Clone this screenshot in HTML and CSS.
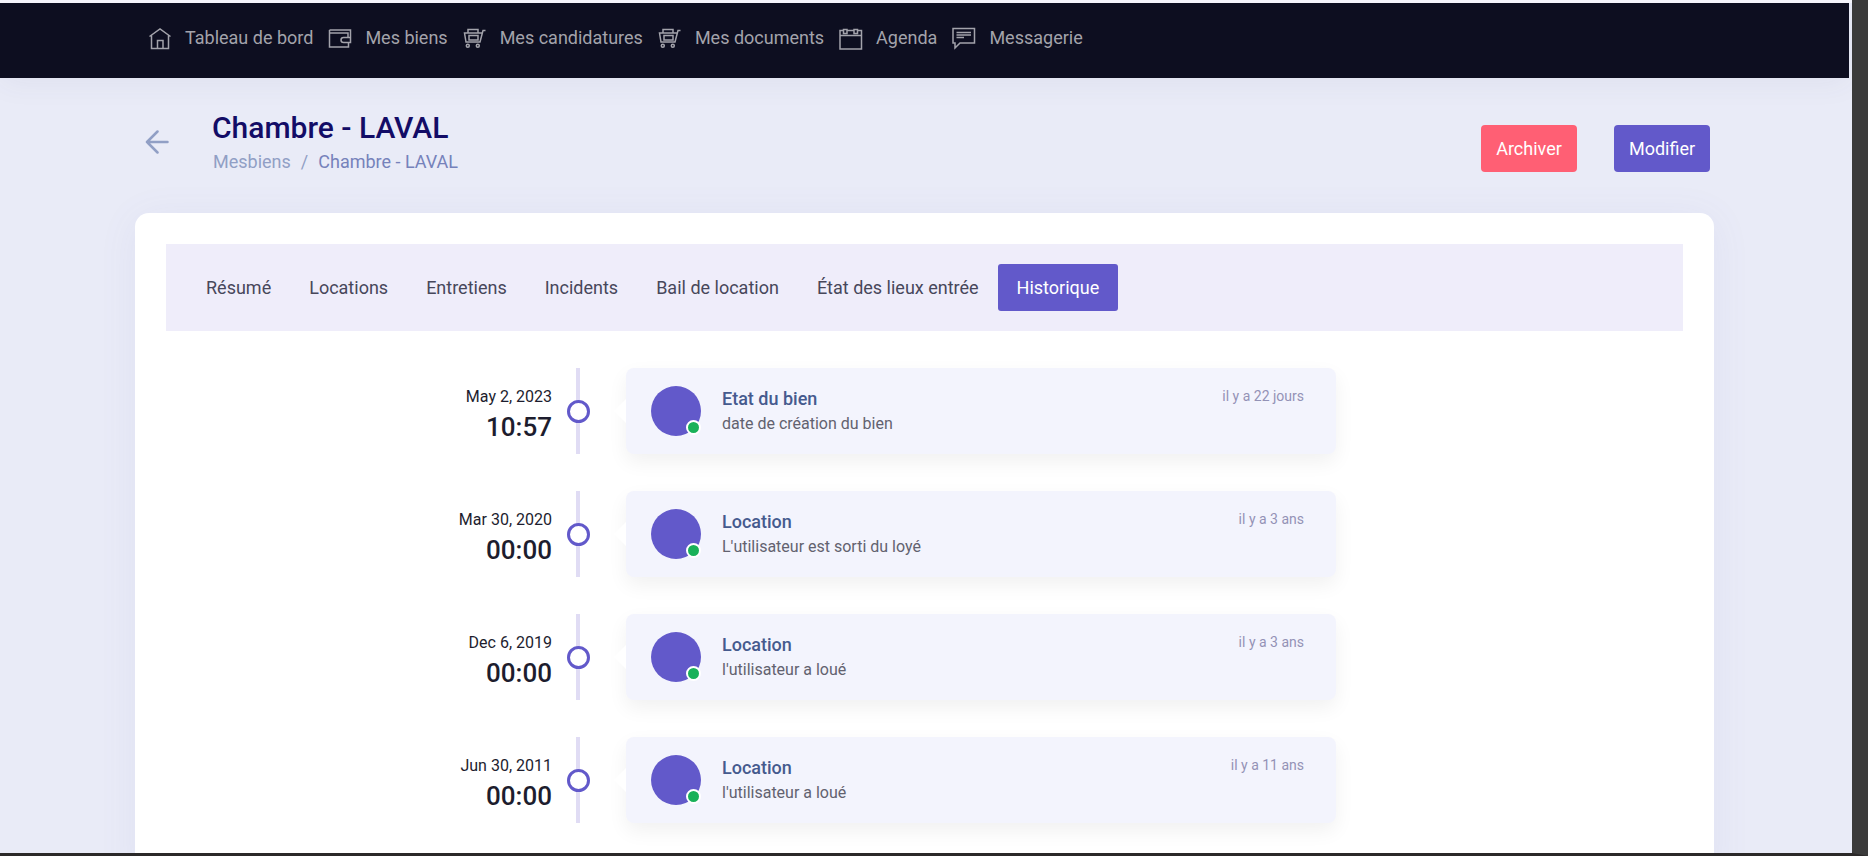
FILE: index.html
```html
<!DOCTYPE html>
<html lang="fr">
<head>
<meta charset="utf-8">
<title>Chambre - LAVAL</title>
<link rel="stylesheet" href="styles.css">
</head>
<body>
<svg class="sprite" aria-hidden="true">
  <symbol id="home" viewBox="0 0 24 24"><path d="M1.500 10.500 12 3l10.500 7.500M3.500 9.500v13h17v-13M9.500 22.500V14.500h5.500v8"/></symbol>
  <symbol id="wallet" viewBox="0 0 24 24"><path d="M1.500 4h21v7.500h-7a2 2 0 0 0 0 5h7v-5M1.500 4v17H20.500v-4.500M1.500 7H20v4"/></symbol>
  <symbol id="cart" viewBox="0 0 24 24"><path d="M22.500 4.500H20L17 16H3L1.500 7H19M5 7V3.500h10V7M6 9.500h9v4.500H6z"/><circle cx="4.800" cy="19.700" r="1.500"/><circle cx="14.800" cy="19.700" r="1.500"/></symbol>
  <symbol id="calendar" viewBox="0 0 24 24"><path d="M4.500 4.500H1v18.500h21.500V4.500H19M8.500 4.500h6M1 9.500h21.500M4.500 3.500h3.500v4H4.500zM15 3.500h3.500v4H15z"/></symbol>
  <symbol id="chat" viewBox="0 0 24 24"><path d="M1 2.500h21.500v14.500H8L3 22v-5H1zM4.500 6.500H19M4.500 9H19M4.500 11.500H12"/></symbol>
</svg>
<div class="window">
  <div class="page">
    <nav class="navbar" aria-label="Navigation principale">
      <a href="#"><svg><use href="#home"/></svg>Tableau de bord</a>
      <a href="#"><svg><use href="#wallet"/></svg>Mes biens</a>
      <a href="#"><svg><use href="#cart"/></svg>Mes candidatures</a>
      <a href="#"><svg><use href="#cart"/></svg>Mes documents</a>
      <a href="#"><svg><use href="#calendar"/></svg>Agenda</a>
      <a href="#"><svg><use href="#chat"/></svg>Messagerie</a>
    </nav>
    <main class="container">
      <header class="heading">
        <a class="back" href="#" aria-label="Retour"><svg viewBox="0 0 24 24"><path d="M22.500 12H2M12.500 1.500 2 12l10.500 10.500"/></svg></a>
        <div class="titles">
          <h1>Chambre - LAVAL</h1>
          <div class="crumbs"><a href="#">Mesbiens</a><span class="slash">/</span><span class="current">Chambre - LAVAL</span></div>
        </div>
        <div class="actions">
          <button class="btn danger" type="button">Archiver</button>
          <button class="btn" type="button">Modifier</button>
        </div>
      </header>
      <section class="card">
        <nav class="tabs" aria-label="Sections du bien">
          <a href="#">Résumé</a>
          <a href="#">Locations</a>
          <a href="#">Entretiens</a>
          <a href="#">Incidents</a>
          <a href="#">Bail de location</a>
          <a href="#">État des lieux entrée</a>
          <a class="active" href="#" aria-current="page">Historique</a>
        </nav>
        <div class="timeline">
          <article class="entry">
            <div class="when"><span class="date">May 2, 2023</span><span class="hour">10:57</span></div>
            <div class="rail"><span class="node"></span></div>
            <div class="event"><span class="avatar"></span><div class="text"><h2>Etat du bien</h2><p>date de création du bien</p></div><span class="ago">il y a 22 jours</span></div>
          </article>
          <article class="entry">
            <div class="when"><span class="date">Mar 30, 2020</span><span class="hour">00:00</span></div>
            <div class="rail"><span class="node"></span></div>
            <div class="event"><span class="avatar"></span><div class="text"><h2>Location</h2><p>L'utilisateur est sorti du loyé</p></div><span class="ago">il y a 3 ans</span></div>
          </article>
          <article class="entry">
            <div class="when"><span class="date">Dec 6, 2019</span><span class="hour">00:00</span></div>
            <div class="rail"><span class="node"></span></div>
            <div class="event"><span class="avatar"></span><div class="text"><h2>Location</h2><p>l'utilisateur a loué</p></div><span class="ago">il y a 3 ans</span></div>
          </article>
          <article class="entry">
            <div class="when"><span class="date">Jun 30, 2011</span><span class="hour">00:00</span></div>
            <div class="rail"><span class="node"></span></div>
            <div class="event"><span class="avatar"></span><div class="text"><h2>Location</h2><p>l'utilisateur a loué</p></div><span class="ago">il y a 11 ans</span></div>
          </article>
        </div>
      </section>
    </main>
  </div>
</div>
</body>
</html>
```
FILE: styles.css
```css
*, *::before, *::after { box-sizing: border-box; }
body {
  margin: 0;
  font-family: Roboto, "Liberation Sans", sans-serif;
  font-size: 18px;
  line-height: 27px;
  color: #1d1d2e;
  background: #e9ebf7;
}
a { color: inherit; text-decoration: none; }
h1, h2, p { margin: 0; }
.sprite { display: none; }
svg { fill: none; stroke: currentColor; }

.window {
  height: 100vh;
  overflow: hidden;
  border-right: 16px solid #3b3b3b;
  border-bottom: 3px solid #2b2929;
}
.page {
  height: 100%;
  overflow: hidden;
  padding-right: 3px;
  border-top: 3px solid #f4f4fb;
}
.navbar {
  display: flex;
  align-items: center;
  gap: 15px;
  height: 75px;
  padding: 0 148px 6px;
  background: #0d0e20;
  color: #a3a3ab;
  box-shadow: 0 5px 30px rgba(60, 60, 110, 0.06);
}
.navbar a { display: flex; align-items: center; gap: 13px; white-space: nowrap; }
.navbar svg { width: 24px; height: 24px; stroke-width: 1.5; }

.container { padding: 30px 135px 0; }
.heading {
  display: flex;
  align-items: flex-start;
  height: 82px;
  margin-bottom: 23px;
  padding: 0 4px 0 10px;
}
.back { display: flex; align-items: center; height: 67px; color: #919fc5; margin-right: 43px; }
.back svg { width: 24px; height: 24px; stroke-width: 2.5; stroke-linecap: round; stroke-linejoin: round; }
.titles { flex: 1; }
h1 { font-size: 30px; line-height: 40px; font-weight: 500; color: #130c66; }
.crumbs { display: flex; gap: 10px; padding-left: 1px; color: #919fc5; }
.current { color: #7682bb; }
.actions { display: flex; gap: 37px; padding-top: 17px; }
.btn {
  height: 47px;
  width: 96px;
  border: 0;
  border-radius: 4px;
  background: #6259ca;
  color: #fff;
  font: inherit;
}
.danger { background: #ff5f74; }

.card {
  padding: 31px 31px 60px;
  border-radius: 14px;
  background: #fff;
  box-shadow: 0 5px 40px rgba(100, 100, 180, 0.07);
}
.tabs {
  display: flex;
  padding: 20px 21px;
  background: #efedfa;
  color: #47475a;
}
.tabs a { padding: 10px 19px; border-radius: 3px; white-space: nowrap; }
.tabs .active { background: #6259ca; color: #fff; }

.timeline { display: grid; gap: 37px; padding-top: 37px; }
.entry {
  display: grid;
  grid-template-columns: 386fr 74px 710fr 347fr;
  height: 86px;
}
.when { display: flex; flex-direction: column; padding-top: 15px; text-align: right; font-weight: 500; }
.date { font-size: 16px; line-height: 28px; font-weight: 400; }
.hour { font-size: 26px; line-height: 32px; }
.rail {
  display: grid;
  place-items: center;
  width: 52px;
  background: linear-gradient(#e0dcf4, #e0dcf4) center / 4px 100% no-repeat;
}
.node {
  width: 23px;
  height: 23px;
  border: 3px solid #6259ca;
  border-radius: 50%;
  background: #fff;
}
.event {
  position: relative;
  display: flex;
  gap: 21px;
  padding: 18px 32px 18px 25px;
  border-radius: 8px;
  background: #f3f4fd;
  box-shadow: 0 8px 20px rgba(0, 0, 0, 0.06);
}
.event::before {
  content: "";
  position: absolute;
  top: 31px;
  right: 100%;
  border: 12px solid transparent;
  border-left-width: 0;
  border-right-color: #fff;
}
.avatar {
  position: relative;
  width: 50px;
  height: 50px;
  border-radius: 50%;
  background: #6259ca;
}
.avatar::after {
  content: "";
  position: absolute;
  right: 0;
  bottom: 1px;
  width: 15px;
  height: 15px;
  border: 2px solid #fff;
  border-radius: 50%;
  background: #19b159;
}
.text { flex: 1; }
h2 { font-size: 18px; line-height: 26px; font-weight: 500; color: #455a8e; }
p { font-size: 16px; line-height: 24px; color: #62626f; }
.ago { font-size: 14px; line-height: 20px; color: #9392b6; }
```
